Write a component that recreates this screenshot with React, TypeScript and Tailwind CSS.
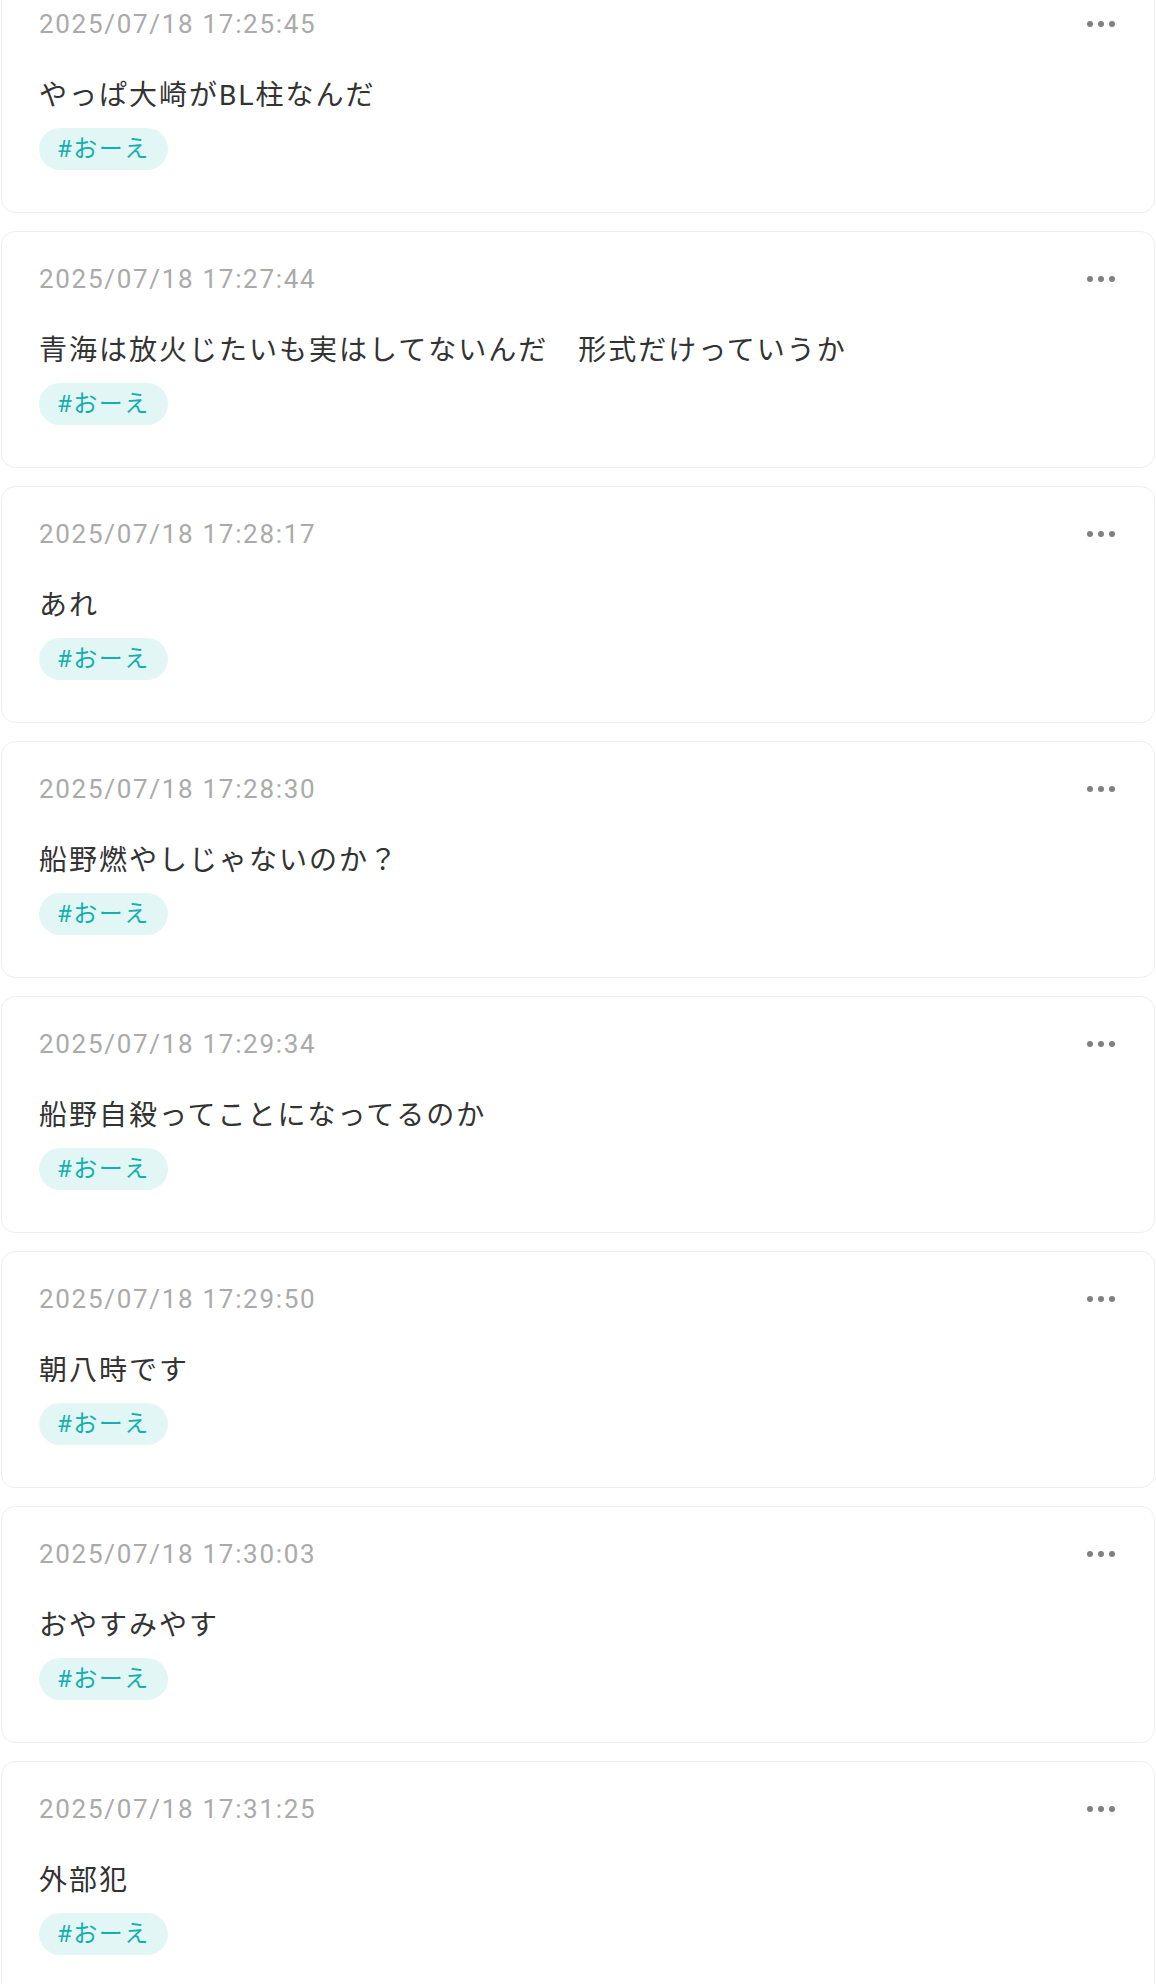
import React from "react";

const posts = [
  { time: "2025/07/18 17:25:45", text: "やっぱ大崎がBL柱なんだ" },
  { time: "2025/07/18 17:27:44", text: "青海は放火じたいも実はしてないんだ　形式だけっていうか" },
  { time: "2025/07/18 17:28:17", text: "あれ" },
  { time: "2025/07/18 17:28:30", text: "船野燃やしじゃないのか？" },
  { time: "2025/07/18 17:29:34", text: "船野自殺ってことになってるのか" },
  { time: "2025/07/18 17:29:50", text: "朝八時です" },
  { time: "2025/07/18 17:30:03", text: "おやすみやす" },
  { time: "2025/07/18 17:31:25", text: "外部犯" },
];

function Card({ time, text }: { time: string; text: string }) {
  return (
    <div className="rounded-[14px] border border-[#efefef] bg-white pt-[27px] pb-[42px] pl-[37px] pr-[39px]">
      <div className="flex h-[40px] items-center justify-between">
        <span className="text-[26px] leading-[40px] tracking-[1.7px] text-[#aaaaaa]">{time}</span>
        <div className="flex items-center gap-[5px]">
          <span className="h-[6px] w-[6px] rounded-full bg-[#808080]" />
          <span className="h-[6px] w-[6px] rounded-full bg-[#808080]" />
          <span className="h-[6px] w-[6px] rounded-full bg-[#808080]" />
        </div>
      </div>
      <div className="mt-[32px] text-[28px] leading-[40px] tracking-[2px] text-[#333333]">{text}</div>
      <div className="mt-[12px] flex">
        <span className="flex h-[42px] items-center rounded-full bg-[#e3f6f6] px-[18px] text-[24px] tracking-[1.5px] text-[#13b0ad]">
          #おーえ
        </span>
      </div>
    </div>
  );
}

export default function App() {
  return (
    <div
      className="min-h-[1984px] bg-white px-[1px]"
      style={{ fontFamily: "Roboto, 'Noto Sans CJK JP', sans-serif" }}
    >
      <div className="-mt-[24px] flex flex-col gap-[18px]">
        {posts.map((p) => (
          <Card key={p.time} time={p.time} text={p.text} />
        ))}
      </div>
    </div>
  );
}
